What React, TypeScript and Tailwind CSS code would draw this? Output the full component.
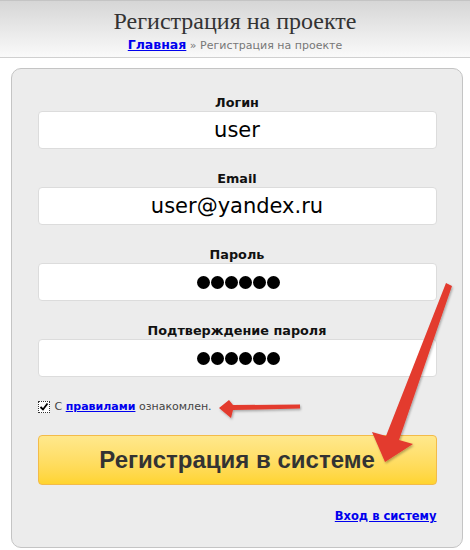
import React from "react";

const sans = "font-['DejaVu_Sans',Verdana,sans-serif]";

function Field({ label, value, password }: { label: string; value: string; password?: boolean }) {
  return (
    <div className="flex flex-col items-center">
      <div className={`${sans} text-[12.8px] leading-[16px] font-bold text-[#111]`}>{label}</div>
      <div className="w-[399px] h-[38px] bg-white border border-[#dcdcdc] rounded-[4px] flex items-center justify-center">
        {password ? (
          <div className="flex gap-[1px] pl-[2px]">
            {[0, 1, 2, 3, 4, 5].map((i) => (
              <div key={i} className="w-[13px] h-[13px] rounded-full bg-black" />
            ))}
          </div>
        ) : (
          <span className={`${sans} text-[21px] leading-none text-black`}>{value}</span>
        )}
      </div>
    </div>
  );
}

export default function App() {
  return (
    <div className="relative w-[470px] h-[550px] bg-white overflow-hidden">
      <div className="h-[58px] border-t border-t-[#c4c4c4] border-b border-b-[#d0d0d0] bg-gradient-to-b from-[#d6d6d6] to-[#fafafa] flex flex-col items-center">
        <div className="font-['Liberation_Serif',serif] text-[24px] leading-[28px] text-[#333] mt-[6px]">
          Регистрация на проекте
        </div>
        <div className={`${sans} text-[11px] leading-[16px] mt-[2px] text-[#777]`}>
          <a className="text-[#0000ee] font-bold underline text-[12.5px]">Главная</a> » Регистрация на проекте
        </div>
      </div>

      <div className="ml-[11px] mt-[10px] w-[452px] h-[480px] bg-[#ececec] border border-[#c4c4c4] rounded-[10px] flex flex-col items-center pt-[26px]">
        <div className="flex flex-col gap-[22px]">
          <Field label="Логин" value="user" />
          <Field label="Email" value="user@yandex.ru" />
          <Field label="Пароль" value="" password />
          <Field label="Подтверждение пароля" value="" password />
        </div>

        <div className={`w-[399px] mt-[22px] flex items-center ${sans} text-[11px] text-[#444] h-[16px]`}>
          <div className="w-[12px] h-[12px] border border-dotted border-[#333] bg-white flex items-center justify-center mr-[5px]">
            <svg width="10" height="10" viewBox="0 0 10 10">
              <path d="M1.5 5 L4 7.5 L8.5 1.5" stroke="#000" strokeWidth="1.8" fill="none" />
            </svg>
          </div>
          <span>
            С <a className="text-[#0000ee] font-bold underline">правилами</a> ознакомлен.
          </span>
        </div>

        <div className="mt-[20px] w-[399px] h-[50px] rounded-[4px] border border-[#f3bb49] bg-gradient-to-b from-[#ffe88c] to-[#ffd42e] flex items-center justify-center">
          <span className="font-['Liberation_Sans',Arial,sans-serif] font-bold text-[24px] text-[#333]">
            Регистрация в системе
          </span>
        </div>

        <div className={`w-[399px] mt-[23px] flex justify-end ${sans} text-[11.5px]`}>
          <a className="text-[#0000ee] font-bold underline">Вход в систему</a>
        </div>
      </div>

      <svg className="absolute inset-0 pointer-events-none" width="470" height="550" viewBox="0 0 470 550">
        <defs>
          <filter id="sh" x="-20%" y="-20%" width="140%" height="140%">
            <feDropShadow dx="1" dy="1.5" stdDeviation="1" floodColor="#000" floodOpacity="0.3" />
          </filter>
        </defs>
        <g filter="url(#sh)" fill="#e33b2e">
          <path d="M446 283 L452 286 L399 440 L413 444 L385 462 L372 432 L386 436 Z" />
          <path d="M300 404.5 L300 408.5 L233 410 L231 418 L219 408 L229 400 L233 405 Z" />
        </g>
      </svg>
    </div>
  );
}
